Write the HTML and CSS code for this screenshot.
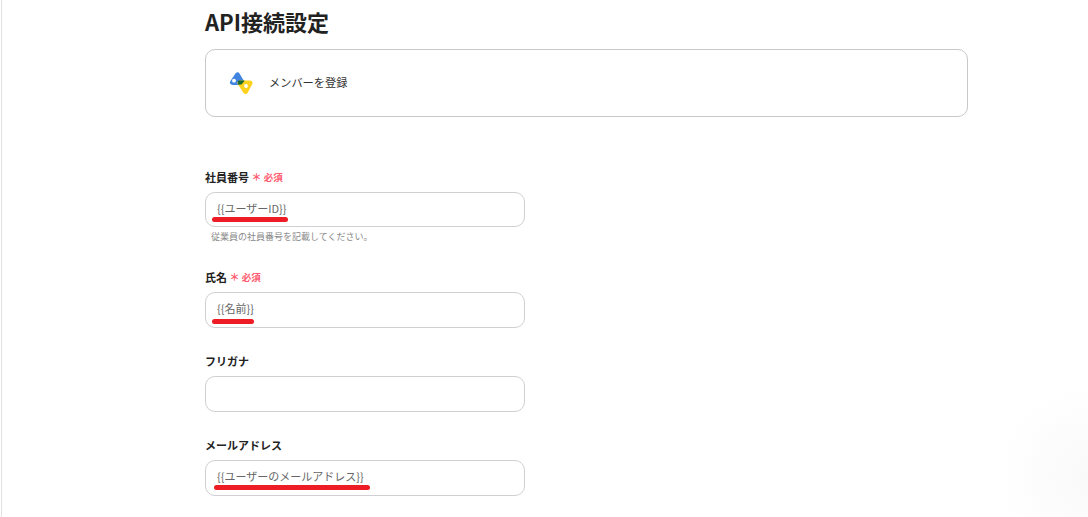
FILE: index.html
```html
<!DOCTYPE html>
<html lang="ja">

<head>
    <meta charset="UTF-8">
    <meta name="viewport" content="width=device-width, initial-scale=1.0">
    <title>API接続設定</title>
    <link rel="stylesheet" href="styles.css">
</head>

<body>
    <div class="page">
        <h1>API接続設定</h1>

        <div class="action-card">
            <svg class="action-icon" width="26" height="26" viewBox="0 0 26 26">
                <polygon points="10.500,5 5.500,12.500 15,12.500" fill="#4285e0" stroke="#4285e0" stroke-width="5" stroke-linejoin="round"/>
                <polygon points="13,13 23,13 18.500,21.500" fill="#fdd21f" stroke="#fdd21f" stroke-width="5" stroke-linejoin="round"/>
                <path d="M12.500 10.500h4.500c.5 0 .7.400.3.800l-2.800 3.300-3.300.2-.4-2.700c-.2-1.200.5-1.600 1.700-1.600z" fill="#1e6b34"/>
                <circle cx="7" cy="10.700" r="1.900" fill="#fff"/>
                <circle cx="19" cy="16" r="1.900" fill="#fff"/>
            </svg>
            <span class="action-name">メンバーを登録</span>
        </div>

        <form class="form">
            <div class="field field-id">
                <label>社員番号 <span class="required"><span class="star">＊</span> 必須</span></label>
                <div class="input-wrap">
                    <input class="input" type="text" value="{{ユーザーID}}">
                    <span class="mark mark-id"></span>
                </div>
                <p class="help">従業員の社員番号を記載してください。</p>
            </div>

            <div class="field field-name">
                <label>氏名 <span class="required"><span class="star">＊</span> 必須</span></label>
                <div class="input-wrap">
                    <input class="input" type="text" value="{{名前}}">
                    <span class="mark mark-name"></span>
                </div>
            </div>

            <div class="field field-kana">
                <label>フリガナ</label>
                <div class="input-wrap">
                    <input class="input" type="text">
                </div>
            </div>

            <div class="field field-mail">
                <label>メールアドレス</label>
                <div class="input-wrap">
                    <input class="input" type="text" value="{{ユーザーのメールアドレス}}">
                    <span class="mark mark-mail"></span>
                </div>
            </div>
        </form>
    </div>
</body>

</html>
```

FILE: styles.css
```css
html,
body {
    height: 100%;
}

body {
    margin: 0;
    overflow: hidden;
    background: radial-gradient(circle at 100% 92%, #f9f9f9 0, #ffffff 90px);
    color: #222;
    font-family: "Noto Sans CJK JP", "Noto Sans", sans-serif;
}

.page {
    box-sizing: border-box;
    height: 100%;
    margin-left: 1px;
    padding: 6px 0 0 203px;
    border-left: 1px solid #e2e2e2;
}

h1 {
    margin: 0;
    font-size: 22px;
    line-height: 30px;
    font-weight: 700;
    color: #222;
}

.action-card {
    display: flex;
    align-items: center;
    box-sizing: border-box;
    width: 763px;
    height: 68px;
    margin-top: 13px;
    padding-left: 21px;
    border: 1px solid #c8c8c8;
    border-radius: 10px;
}

.action-name {
    margin-left: 16px;
    margin-top: -2px;
    font-size: 11.200px;
    color: #333;
}

.form {
    margin-top: 51px;
}

.field {
    width: 320px;
}

.field label {
    display: block;
    height: 18px;
    font-size: 11px;
    line-height: 18px;
    font-weight: 700;
    color: #222;
}

.required {
    font-size: 9.500px;
    color: #ff5a6e;
    vertical-align: 1px;
}

.star {
    font-size: 10px;
}

.input-wrap {
    position: relative;
    margin-top: 6px;
}

.input {
    display: block;
    box-sizing: border-box;
    width: 320px;
    height: 36px;
    padding: 0 11px 4px;
    border: 1px solid #cfcfd4;
    border-radius: 10px;
    outline: none;
    background: #fff;
    font-family: inherit;
    font-size: 11px;
    color: #666;
}

.field-id .input {
    height: 35px;
}

.help {
    margin: 3px 0 0 6px;
    font-size: 9px;
    line-height: 14px;
    color: #888;
}

.field-name {
    margin-top: 24px;
}

.field-kana {
    margin-top: 24px;
}

.field-mail {
    margin-top: 24px;
}

/* красные подчёркивания поверх полей */
.mark {
    position: absolute;
    left: 7px;
    height: 5px;
    border-radius: 3px;
    background: #ee1c25;
}

.mark-id {
    top: 25px;
    width: 76px;
}

.mark-name {
    top: 27px;
    width: 42px;
}

.mark-mail {
    top: 25px;
    left: 9px;
    width: 156px;
}
```
